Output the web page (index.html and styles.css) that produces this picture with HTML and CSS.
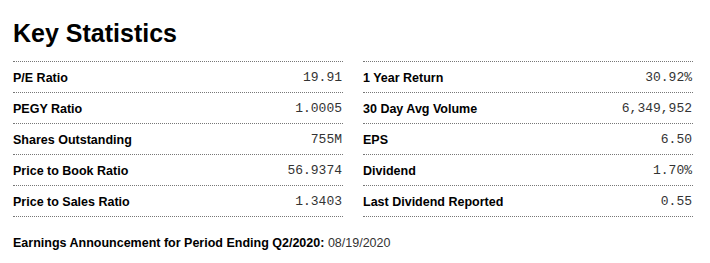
FILE: index.html
```html
<!DOCTYPE html>
<html lang="en">
<head>
<meta charset="utf-8">
<title>Key Statistics</title>
<link rel="stylesheet" href="styles.css">
</head>
<body>
<section class="stats">
  <h1 class="title">Key Statistics</h1>
  <div class="grid">
    <div class="col">
      <div class="row"><span class="label">P/E Ratio</span><span class="value">19.91</span></div>
      <div class="row"><span class="label">PEGY Ratio</span><span class="value">1.0005</span></div>
      <div class="row"><span class="label">Shares Outstanding</span><span class="value">755M</span></div>
      <div class="row"><span class="label">Price to Book Ratio</span><span class="value">56.9374</span></div>
      <div class="row"><span class="label">Price to Sales Ratio</span><span class="value">1.3403</span></div>
    </div>
    <div class="col">
      <div class="row"><span class="label">1 Year Return</span><span class="value">30.92%</span></div>
      <div class="row"><span class="label">30 Day Avg Volume</span><span class="value">6,349,952</span></div>
      <div class="row"><span class="label">EPS</span><span class="value">6.50</span></div>
      <div class="row"><span class="label">Dividend</span><span class="value">1.70%</span></div>
      <div class="row"><span class="label">Last Dividend Reported</span><span class="value">0.55</span></div>
    </div>
  </div>
  <p class="footer"><span class="footer-label">Earnings Announcement for Period Ending Q2/2020:</span> <span class="footer-value">08/19/2020</span></p>
</section>
</body>
</html>
```
FILE: styles.css
```css
html, body {
  margin: 0;
  padding: 0;
  background: #ffffff;
}
body {
  font-family: "Liberation Sans", Arial, sans-serif;
  color: #000000;
}
.stats {
  padding: 19px 13px 0 13px;
}
.title {
  margin: 0 0 14px 0;
  font-size: 25px;
  line-height: 28px;
  font-weight: 700;
  color: #000;
}
.grid {
  display: grid;
  grid-template-columns: 330px 330px;
  column-gap: 20px;
}
.col {
  display: flex;
  flex-direction: column;
  border-bottom: 1px dotted #777;
}
.row {
  display: flex;
  justify-content: space-between;
  align-items: center;
  height: 30px;
  padding-top: 1px;
  box-sizing: border-box;
  height: 31px;
  border-top: 1px dotted #777;
}
.label {
  font-size: 12.5px;
  font-weight: 700;
  color: #000;
}
.value {
  font-family: "Liberation Mono", "Courier New", monospace;
  font-size: 13px;
  color: #333;
  padding-right: 1px;
}
.footer {
  margin: 18px 0 0 0;
  font-size: 12.5px;
  line-height: 16px;
}
.footer-label {
  font-weight: 700;
}
.footer-value {
  color: #333;
}
```
